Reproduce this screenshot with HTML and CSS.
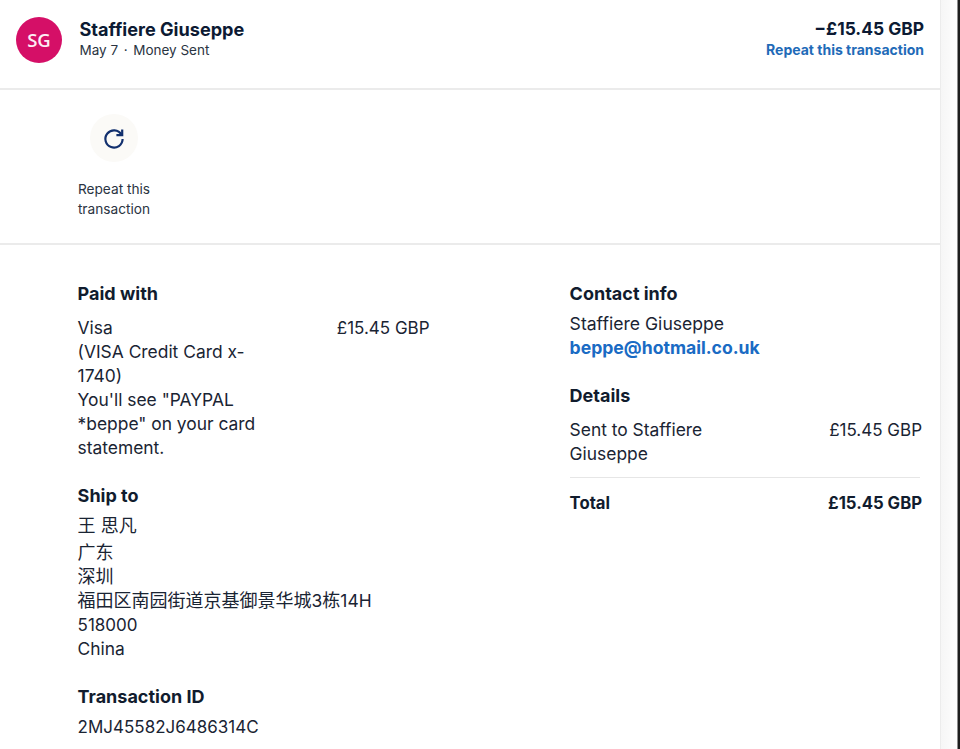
FILE: index.html
```html
<!DOCTYPE html>
<html lang="en">
<head>
<meta charset="utf-8">
<title>Transaction details</title>
<link rel="stylesheet" href="styles.css">
</head>
<body>
<div class="frame">
<main class="card">
  <header class="head">
    <div class="avatar">SG</div>
    <div class="who">
      <div class="name">Staffiere Giuseppe</div>
      <div class="meta"><span>May 7</span><span class="dot">·</span><span>Money Sent</span></div>
    </div>
    <div class="sum">
      <div class="amount">−£15.45 GBP</div>
      <a class="repeat-link">Repeat this transaction</a>
    </div>
  </header>
  <section class="actions">
    <div class="action">
      <div class="action-icon">
        <svg width="24" height="24" viewBox="0 0 24 24" fill="none" stroke="#12306e" stroke-width="2.2"><path d="M19.4 8.6A8.6 8.6 0 1 0 20.6 13"/><path d="M20.2 3.4V9.2H14.4"/></svg>
      </div>
      <div class="action-label">Repeat this<br>transaction</div>
    </div>
  </section>
  <section class="body">
    <div class="col-left">
      <div class="block">
        <h3 class="title">Paid with</h3>
        <div class="paid">
          <div class="paid-text">Visa<br>(VISA Credit Card x-1740)<br>You'll see "PAYPAL *beppe" on your card statement.</div>
          <div class="money">£15.45 GBP</div>
        </div>
      </div>
      <div class="block ship">
        <h3 class="title">Ship to</h3>
        <div class="ship-name cjk">王 思凡</div>
        <div class="text"><span class="cjk">广东</span><br><span class="cjk">深圳</span><br><span class="cjk">福田区南园街道京基御景华城</span>3<span class="cjk">栋</span>14H<br><span class="money">518000</span><br>China</div>
      </div>
      <div class="block tid">
        <h3 class="title">Transaction ID</h3>
        <div class="money">2MJ45582J6486314C</div>
      </div>
    </div>
    <div class="col-right">
      <div class="block">
        <h3 class="title">Contact info</h3>
        <div class="contact">Staffiere Giuseppe<br><a class="email">beppe@hotmail.co.uk</a></div>
      </div>
      <div class="block details">
        <h3 class="title">Details</h3>
        <div class="row sent">
          <div class="row-label">Sent to Staffiere Giuseppe</div>
          <div class="money">£15.45 GBP</div>
        </div>
        <div class="rule"></div>
        <div class="row total">
          <div>Total</div>
          <div>£15.45 GBP</div>
        </div>
      </div>
    </div>
  </section>
</main>
<div class="edge"></div>
</div>
</body>
</html>
```
FILE: styles.css
```css
* { box-sizing: border-box; }
html, body { margin: 0; padding: 0; height: 100%; overflow: hidden; }
body { font-family: Inter, "Noto Sans CJK SC", sans-serif; color: #1a2433; background: #fff; font-size: 17.4px; line-height: 24px; }
.frame { display: flex; height: 749px; width: 960px; overflow: hidden; }
.card { width: 941px; flex: none; background: #fff; border-right: 1px solid #ececec; }
.edge { flex: 1; background: linear-gradient(90deg, #f6f6f6, #fdfdfd 16px, #1c1c1c 17px, #1c1c1c); }
.head { display: flex; align-items: center; height: 90px; padding: 0 16px 12px 16px; border-bottom: 2px solid #ebebeb; }
.avatar { width: 46px; height: 46px; margin-top: 4px; border-radius: 50%; background: #d50f67; color: #fdeef5; display: flex; align-items: center; justify-content: center; font: 600 18.5px/1 "Open Sans", sans-serif; }
.who { margin-left: 17.5px; flex: 1; }
.name { font-size: 18.1px; font-weight: 700; line-height: 24px; color: #0c1a33; }
.meta { font-size: 13.5px; line-height: 18px; color: #2a3442; display: flex; }
.dot { margin: 0 5.6px; }
.sum { text-align: right; }
.amount { font-size: 17.4px; font-weight: 700; line-height: 24px; color: #0c1a33; }
.repeat-link { display: block; font-size: 14px; font-weight: 700; line-height: 18px; color: #1f6bb8; }
.actions { height: 155px; padding: 24px 0 0 78px; border-bottom: 2px solid #ebebeb; }
.action { width: 72px; display: flex; flex-direction: column; align-items: center; }
.action-icon { width: 48px; height: 48px; border-radius: 50%; background: #fbfaf7; display: flex; align-items: center; justify-content: center; }
.action-label { margin-top: 17px; font-size: 13.7px; line-height: 20px; text-align: center; color: #2a3442; white-space: nowrap; }
.body { display: flex; padding: 37px 18px 0 77.6px; }
.col-left { width: 492px; flex: none; }
.col-right { flex: 1; }
.title { margin: 0; font-size: 18px; font-weight: 700; line-height: 24px; color: #111c2e; }
.money { font-size: 17px; }
.paid { display: flex; margin-top: 10px; width: 352px; justify-content: space-between; }
.paid-text { width: 180px; }
.ship { margin-top: 24px; }
.cjk { font-size: 18px; line-height: 24px; }
.ship-name { margin-top: 6px; margin-bottom: 3px; }
.tid { margin-top: 24px; }
.tid .money { margin-top: 6px; }
.contact { margin-top: 6px; font-size: 17.6px; }
.email { font-weight: 700; color: #1a6bc4; }
.details { margin-top: 24px; }
.row { display: flex; justify-content: space-between; }
.sent { margin-top: 10px; }
.rule { width: 350px; height: 1px; margin-top: 11px; background: #e6e6e6; }
.row-label { width: 190px; }
.total { margin-top: 13px; font-size: 16.7px; font-weight: 700; color: #111c2e; }
```
